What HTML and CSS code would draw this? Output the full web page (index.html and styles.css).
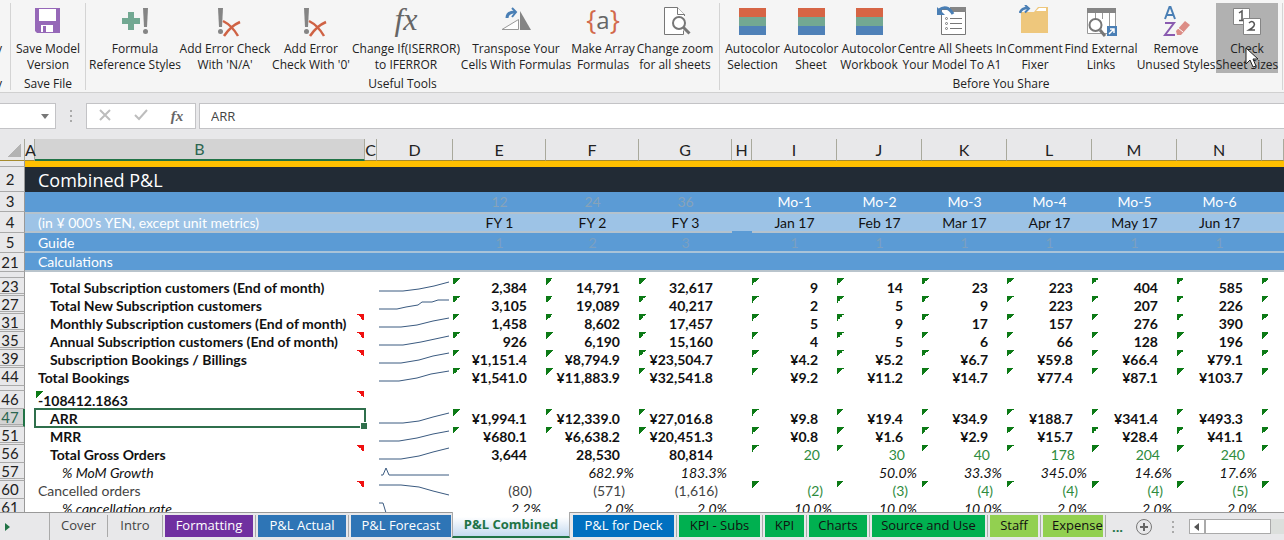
FILE: index.html
```html
<!DOCTYPE html>
<html lang="en">
<head>
  <meta charset="UTF-8" />
  <meta name="viewport" content="width=device-width,initial-scale=1.0" />
  <title>Combined P&amp;L</title>
  <link rel="stylesheet" href="styles.css">
</head>
<body>

  <!-- Ribbon -->
  <header class="ribbon">
    <div class="group group-cut">
      <div class="tools"><span>y</span></div>
      <div class="group-name">y</div>
    </div>

    <div class="group group-save">
      <div class="tools">
        <button class="tool">
          <svg width="32" height="32" viewBox="0 0 32 32">
            <path d="M3 3h25v25H5l-2-2z" fill="#9668b8"/>
            <path d="M7 4h17v12H7zM9 20h12v7H9z" fill="#fff"/>
            <path d="M11 21h3v6h-3z" fill="#9668b8"/>
          </svg>
          <span>Save Model<br>Version</span>
        </button>
      </div>
      <div class="group-name">Save File</div>
    </div>

    <div class="group group-useful">
      <div class="tools">
        <button class="tool">
          <svg width="32" height="32" viewBox="0 0 32 32">
            <path d="M9 7h6v6h6v6h-6v6H9v-6H3v-6h6z" fill="#72a892"/>
            <path d="M24 3h5l-1 19h-3z" fill="#858585"/>
            <circle cx="26.500" cy="26.500" r="2.500" fill="#858585"/>
          </svg>
          <span>Formula<br>Reference Styles</span>
        </button>
        <button class="tool">
          <svg width="32" height="32" viewBox="0 0 32 32">
            <path d="M9 3h5l-1 19h-3z" fill="#858585"/>
            <circle cx="11.500" cy="26.500" r="2.500" fill="#858585"/>
            <path d="M14 16c6 3 11 8 15 15M31 17c-7 3-12 8-16 14" fill="none" stroke="#cf6244" stroke-width="2.500"/>
          </svg>
          <span>Add Error Check<br>With 'N/A'</span>
        </button>
        <button class="tool">
          <svg width="32" height="32" viewBox="0 0 32 32">
            <path d="M9 3h5l-1 19h-3z" fill="#858585"/>
            <circle cx="11.500" cy="26.500" r="2.500" fill="#858585"/>
            <path d="M14 16c6 3 11 8 15 15M31 17c-7 3-12 8-16 14" fill="none" stroke="#cf6244" stroke-width="2.500"/>
          </svg>
          <span>Add Error<br>Check With '0'</span>
        </button>
        <button class="tool">
          <i class="fx">fx</i>
          <span>Change If(ISERROR)<br>to IFERROR</span>
        </button>
        <button class="tool">
          <svg width="32" height="32" viewBox="0 0 32 32">
            <path d="M2 24.500L18.500 14.500V24.500z" fill="#fff" stroke="#999"/>
            <path d="M20 6v19h11z" fill="#858585"/>
            <path d="M7 13q0-6 8-6" fill="none" stroke="#4a7fb5" stroke-width="3"/>
            <path d="M12 3l4 4-4 5" fill="none" stroke="#4a7fb5" stroke-width="2"/>
          </svg>
          <span>Transpose Your<br>Cells With Formulas</span>
        </button>
        <button class="tool">
          <i class="braces">{<b>a</b>}</i>
          <span>Make Array<br>Formulas</span>
        </button>
        <button class="tool">
          <svg width="32" height="32" viewBox="0 0 32 32">
            <path d="M25.500 11V9.500L18.500 2.500H5.500v27h19v-4" fill="#fff" stroke="#777"/>
            <path d="M18.500 2.500v7h7" fill="#fff" stroke="#777"/>
            <circle cx="20" cy="18" r="6" fill="#fff" stroke="#777" stroke-width="2"/>
            <path d="M24.500 22.500l6 6" stroke="#777" stroke-width="3"/>
          </svg>
          <span>Change zoom<br>for all sheets</span>
        </button>
      </div>
      <div class="group-name">Useful Tools</div>
    </div>

    <div class="group group-share">
      <div class="tools">
        <button class="tool"><i class="stripes"></i><span>Autocolor<br>Selection</span></button>
        <button class="tool"><i class="stripes"></i><span>Autocolor<br>Sheet</span></button>
        <button class="tool"><i class="stripes"></i><span>Autocolor<br>Workbook</span></button>
        <button class="tool">
          <svg width="32" height="32" viewBox="0 0 32 32">
            <path d="M5.500 4.500h24v25h-24z" fill="#fff" stroke="#777"/>
            <path d="M14 2h16v5H14z" fill="#858585"/>
            <path d="M14 13.500h12M14 18.500h12M14 23.500h12" stroke="#777"/>
            <path d="M3 5q8-6 14 4" fill="none" stroke="#4a7fb5" stroke-width="3"/>
            <path d="M1 2v8h8z" fill="#4a7fb5"/>
            <g fill="#fff" stroke="#777"><circle cx="10.500" cy="13.500" r="1"/><circle cx="10.500" cy="18.500" r="1"/><circle cx="10.500" cy="23.500" r="1"/></g>
          </svg>
          <span>Centre All Sheets In<br>Your Model To A1</span>
        </button>
        <button class="tool">
          <svg width="32" height="32" viewBox="0 0 32 32">
            <path d="M2 7h13l4-5h10v26H2z" fill="#eec77c"/>
            <path d="M17 6l3-3h7v3z" fill="#fff"/>
            <path d="M1 8q1-5 8-5" fill="none" stroke="#4a7fb5" stroke-width="2.500"/>
            <path d="M6 0l4 3.500-4 4" fill="none" stroke="#4a7fb5" stroke-width="2"/>
          </svg>
          <span>Comment<br>Fixer</span>
        </button>
        <button class="tool">
          <svg width="32" height="32" viewBox="0 0 32 32">
            <path d="M2.500 4.500h28v24h-28z" fill="#fff" stroke="#999"/>
            <path d="M2 3h29v5H2z" fill="#858585"/>
            <path d="M10.500 8v6M17.500 8v6M24.500 8v13" stroke="#999"/>
            <circle cx="10.500" cy="20" r="6" fill="#fff" stroke="#777" stroke-width="2"/>
            <path d="M15 25l5 6" stroke="#777" stroke-width="3"/>
            <path d="M22 21h10v10H22z" fill="#4a7fb5"/>
            <path d="M24 29l5-5M25 24h4v4" fill="none" stroke="#fff" stroke-width="1.500"/>
          </svg>
          <span>Find External<br>Links</span>
        </button>
        <button class="tool">
          <svg width="32" height="32" viewBox="0 0 32 32">
            <path d="M5 14L9.500 2h1L15 14M7 10h6" fill="none" stroke="#4a7fb5" stroke-width="2"/>
            <path d="M5 18h9L5 30h10" fill="none" stroke="#8a5bb0" stroke-width="2"/>
            <path d="M16 26l9-10 5 4-9 10h-4z" fill="#dc8d86"/>
            <path d="M18 23l5 4" stroke="#fff"/>
          </svg>
          <span>Remove<br>Unused Styles</span>
        </button>
        <button class="tool tool-hover">
          <svg width="32" height="32" viewBox="0 0 32 32">
            <path d="M2.500 3.500h16v16h-16z" fill="#fff" stroke="#858585"/>
            <path d="M8 8l3-2v9M8 15.500h5" fill="none" stroke="#555" stroke-width="1.500"/>
            <path d="M12.500 13.500h17v16h-17z" fill="#fff" stroke="#858585"/>
            <path d="M18 18q3-3 5 0t-5 7h6" fill="none" stroke="#555" stroke-width="1.500"/>
          </svg>
          <span>Check<br>Sheet Sizes</span>
          <svg class="pointer" width="14" height="22" viewBox="0 0 14 22">
            <path d="M1 1v16l4-4 3 7 3-1-3-7h5z" fill="#fff" stroke="#222"/>
          </svg>
        </button>
      </div>
      <div class="group-name">Before You Share</div>
    </div>
  </header>

  <!-- Formula bar -->
  <div class="formula-bar">
    <button class="name-box" aria-label="Name box"><i></i></button>
    <span class="grip"></span>
    <div class="formula-buttons">
      <button aria-label="Cancel">
        <svg width="12" height="12" viewBox="0 0 12 12"><path d="M1 1l10 10M11 1L1 11" stroke="#bdbdbd" stroke-width="2"/></svg>
      </button>
      <button aria-label="Enter">
        <svg width="14" height="12" viewBox="0 0 14 12"><path d="M1 6l4 4 8-9" fill="none" stroke="#bdbdbd" stroke-width="2"/></svg>
      </button>
      <button aria-label="Insert function"><i class="fx-small">fx</i></button>
    </div>
    <input class="formula" type="text" value="ARR" aria-label="Formula">
  </div>

  <!-- Worksheet -->
  <main class="sheet">
    <table>
      <colgroup>
        <col class="w-head"><col class="w-a"><col class="w-b"><col class="w-c"><col class="w-d">
        <col class="w-year"><col class="w-year"><col class="w-year"><col class="w-h">
        <col class="w-month"><col class="w-month"><col class="w-month"><col class="w-month"><col class="w-month"><col class="w-month">
        <col>
      </colgroup>
      <thead>
        <tr>
          <th class="corner"></th><th>A</th><th class="picked">B</th><th>C</th><th>D</th><th>E</th><th>F</th><th>G</th><th>H</th><th>I</th><th>J</th><th>K</th><th>L</th><th>M</th><th>N</th><th></th>
        </tr>
      </thead>
      <tbody>
        <tr class="gold"><th></th><td colspan="15"></td></tr>
        <tr class="title"><th>2</th><td></td><td colspan="14">Combined P&amp;L</td></tr>
        <tr class="band periods">
          <th>3</th><td></td><td></td><td></td><td></td>
          <td class="faint">12</td><td class="faint">24</td><td class="faint">36</td><td></td>
          <td>Mo-1</td><td>Mo-2</td><td>Mo-3</td><td>Mo-4</td><td>Mo-5</td><td>Mo-6</td><td></td>
        </tr>
        <tr class="band dates">
          <th>4</th><td></td><td class="label">(in ¥ 000's YEN, except unit metrics)</td><td></td><td></td>
          <td>FY 1</td><td>FY 2</td><td>FY 3</td><td class="no-line"></td>
          <td>Jan 17</td><td>Feb 17</td><td>Mar 17</td><td>Apr 17</td><td>May 17</td><td>Jun 17</td><td></td>
        </tr>
        <tr class="band guide">
          <th>5</th><td></td><td class="label">Guide</td><td></td><td></td>
          <td class="faint">1</td><td class="faint">2</td><td class="faint">3</td><td></td>
          <td class="faint">1</td><td class="faint">1</td><td class="faint">1</td><td class="faint">1</td><td class="faint">1</td><td class="faint">1</td><td></td>
        </tr>
        <tr class="band calc"><th>21</th><td></td><td class="label" colspan="14">Calculations</td></tr>
        <tr class="gap"><th></th><td colspan="15"></td></tr>

        <tr class="total flags-all skip">
          <th>23</th><td></td><td class="in1">Total Subscription customers (End of month)</td><td></td>
          <td><svg class="spark" viewBox="0 0 76 18"><path d="M2 13h24l16-2 15-3 15-4"/></svg></td>
          <td>2,384</td><td>14,791</td><td>32,617</td><td></td>
          <td>9</td><td>14</td><td>23</td><td>223</td><td>404</td><td>585</td><td></td>
        </tr>
        <tr class="total flags-all skip">
          <th>27</th><td></td><td class="in1">Total New Subscription customers</td><td></td>
          <td><svg class="spark" viewBox="0 0 76 18"><path d="M2 13h18l9-2 6-1 6-1 4-3h10l6-2h11"/></svg></td>
          <td>3,105</td><td>19,089</td><td>40,217</td><td></td>
          <td>2</td><td>5</td><td>9</td><td>223</td><td>207</td><td>226</td><td></td>
        </tr>
        <tr class="total flags-all skip">
          <th>31</th><td></td><td class="in1 note">Monthly Subscription customers (End of month)</td><td></td>
          <td><svg class="spark" viewBox="0 0 76 18"><path d="M2 13h22l16-2 16-4 16-3"/></svg></td>
          <td>1,458</td><td>8,602</td><td>17,457</td><td></td>
          <td>5</td><td>9</td><td>17</td><td>157</td><td>276</td><td>390</td><td></td>
        </tr>
        <tr class="total flags-all skip">
          <th>35</th><td></td><td class="in1 note">Annual Subscription customers (End of month)</td><td></td>
          <td><svg class="spark" viewBox="0 0 76 18"><path d="M2 13h24l18-3 14-3 14-3"/></svg></td>
          <td>926</td><td>6,190</td><td>15,160</td><td></td>
          <td>4</td><td>5</td><td>6</td><td>66</td><td>128</td><td>196</td><td></td>
        </tr>
        <tr class="total flags-all skip">
          <th>39</th><td></td><td class="in1 note">Subscription Bookings / Billings</td><td></td>
          <td><svg class="spark" viewBox="0 0 76 18"><path d="M2 13h22l18-3 14-4 16-3"/></svg></td>
          <td>¥1,151.4</td><td>¥8,794.9</td><td>¥23,504.7</td><td></td>
          <td>¥4.2</td><td>¥5.2</td><td>¥6.7</td><td>¥59.8</td><td>¥66.4</td><td>¥79.1</td><td></td>
        </tr>
        <tr class="total flags-all">
          <th>44</th><td></td><td>Total Bookings</td><td></td>
          <td><svg class="spark" viewBox="0 0 76 18"><path d="M2 13h20l18-3 14-4 18-3"/></svg></td>
          <td>¥1,541.0</td><td>¥11,883.9</td><td>¥32,541.8</td><td></td>
          <td>¥9.2</td><td>¥11.2</td><td>¥14.7</td><td>¥77.4</td><td>¥87.1</td><td>¥103.7</td><td></td>
        </tr>
        <tr class="gap gap-wide"><th></th><td colspan="15"></td></tr>
        <tr class="total">
          <th>46</th><td></td><td class="note flag">-108412.1863</td><td></td><td></td>
          <td></td><td></td><td></td><td></td><td></td><td></td><td></td><td></td><td></td><td></td><td></td>
        </tr>
        <tr class="total flags-all skip current">
          <th>47</th><td></td><td class="in1 selected">ARR</td><td></td>
          <td><svg class="spark" viewBox="0 0 76 18"><path d="M2 14h24l16-2 14-4 16-4"/></svg></td>
          <td>¥1,994.1</td><td>¥12,339.0</td><td>¥27,016.8</td><td></td>
          <td>¥9.8</td><td>¥19.4</td><td>¥34.9</td><td>¥188.7</td><td>¥341.4</td><td>¥493.3</td><td></td>
        </tr>
        <tr class="total flags-all skip">
          <th>51</th><td></td><td class="in1">MRR</td><td></td>
          <td><svg class="spark" viewBox="0 0 76 18"><path d="M2 14h20l18-3 16-4 16-3"/></svg></td>
          <td>¥680.1</td><td>¥6,638.2</td><td>¥20,451.3</td><td></td>
          <td>¥0.8</td><td>¥1.6</td><td>¥2.9</td><td>¥15.7</td><td>¥28.4</td><td>¥41.1</td><td></td>
        </tr>
        <tr class="total flags-months">
          <th>56</th><td></td><td class="in1 note">Total Gross Orders</td><td></td>
          <td><svg class="spark" viewBox="0 0 76 18"><path d="M2 14h22l18-3 14-4 16-4"/></svg></td>
          <td>3,644</td><td>28,530</td><td>80,814</td><td></td>
          <td class="link">20</td><td class="link">30</td><td class="link">40</td><td class="link">178</td><td class="link">204</td><td class="link">240</td><td></td>
        </tr>
        <tr class="rate skip">
          <th>57</th><td></td><td class="in2">% MoM Growth</td><td></td>
          <td><svg class="spark" viewBox="0 0 76 18"><path d="M4 12h2l3-7 3 7h60"/></svg></td>
          <td></td><td>682.9%</td><td>183.3%</td><td></td>
          <td></td><td>50.0%</td><td>33.3%</td><td>345.0%</td><td>14.6%</td><td>17.6%</td><td></td>
        </tr>
        <tr class="minus flags-months">
          <th>60</th><td></td><td class="note">Cancelled orders</td><td></td>
          <td><svg class="spark" viewBox="0 0 76 18"><path d="M2 4h22l18 2 14 4 16 4"/></svg></td>
          <td>(80)</td><td>(571)</td><td>(1,616)</td><td></td>
          <td class="link">(2)</td><td class="link">(3)</td><td class="link">(4)</td><td class="link">(4)</td><td class="link">(4)</td><td class="link">(5)</td><td></td>
        </tr>
        <tr class="rate">
          <th>61</th><td></td><td class="in2">% cancellation rate</td><td></td>
          <td><svg class="spark" viewBox="0 0 76 18"><path d="M2 4h4l4 13h62"/></svg></td>
          <td>2.2%</td><td>2.0%</td><td>2.0%</td><td></td>
          <td>10.0%</td><td>10.0%</td><td>10.0%</td><td>2.0%</td><td>2.0%</td><td>2.0%</td><td></td>
        </tr>
      </tbody>
    </table>
  </main>

  <!-- Sheet tabs -->
  <footer class="tab-bar">
    <button class="scroll-tabs" aria-label="Next sheets"></button>
    <nav class="tabs">
      <button class="tab w58">Cover</button>
      <button class="tab w54">Intro</button>
      <button class="tab color purple w88">Formatting</button>
      <button class="tab color blue w88">P&amp;L Actual</button>
      <button class="tab color blue w100">P&amp;L Forecast</button>
      <button class="tab active">P&amp;L Combined</button>
      <button class="tab color deck w101">P&amp;L for Deck</button>
      <button class="tab color green w81">KPI - Subs</button>
      <button class="tab color green w39">KPI</button>
      <button class="tab color green w58">Charts</button>
      <button class="tab color green w113">Source and Use</button>
      <button class="tab color lime w48">Staff</button>
      <button class="tab color lime cut">Expense</button>
    </nav>
    <button class="more" aria-label="More sheets">...</button>
    <button class="add" aria-label="New sheet">
      <svg width="18" height="18" viewBox="0 0 18 18">
        <circle cx="9" cy="9" r="7.500" fill="none" stroke="#777"/>
        <path d="M9 5v8M5 9h8" stroke="#666" stroke-width="2"/>
      </svg>
    </button>
    <span class="grip"></span>
    <div class="scrollbar">
      <button class="scroll-left" aria-label="Scroll left"></button>
      <div class="thumb"></div>
    </div>
  </footer>

</body>
</html>
```
FILE: styles.css
```css
* {
  box-sizing: border-box;
}
body {
  margin: 0;
  height: 100vh;
  display: flex;
  flex-direction: column;
  overflow: hidden;
  background: #e8e8ea;
  color: #222;
  font-family: "Open Sans", "Noto Sans", sans-serif;
  font-size: 12px;
}
button {
  border: 0;
  padding: 0;
  background: none;
  color: inherit;
  font: inherit;
}

/* Ribbon */
.ribbon {
  display: flex;
  flex: none;
  padding-top: 3px;
  background: #f5f5f5;
  border-bottom: 1px solid #d0d0d0;
}
.group {
  display: flex;
  flex-direction: column;
  border-right: 1px solid #d4d4d4;
  margin-bottom: 2px;
}
.tools {
  display: grid;
  height: 70px;
}
.group-cut {
  width: 11px;
}
.group-cut .tools {
  align-items: end;
  padding-bottom: 16px;
}
.group-cut .tools,
.group-cut .group-name {
  direction: rtl;
  padding-right: 8px;
}
.group-save {
  width: 75px;
}
.group-useful {
  width: 634px;
}
.group-useful .tools {
  grid-template-columns: 92px 88px 84px 106px 114px 60px 84px;
  padding-left: 3px;
}
.group-share {
  width: 563px;
}
.group-share .tools {
  grid-template-columns: 59px 58px 58px 108px 58px 74px 76px 66px;
  padding-left: 3px;
}
.group-name {
  margin-top: 5px;
  line-height: 12px;
  text-align: center;
}
.tool {
  display: flex;
  flex-direction: column;
  align-items: center;
  gap: 4px;
  padding-top: 2px;
  line-height: 16px;
  white-space: nowrap;
}
.tool > svg,
.tool > i {
  flex: none;
  width: 32px;
  height: 32px;
}
.tool > .pointer {
  position: absolute;
  left: 29px;
  top: 44px;
  width: 14px;
  height: 22px;
}
.tool-hover {
  position: relative;
  margin: 0 2px;
  background: #b1b1b1;
}
.fx {
  font: italic 32px/28px "Liberation Serif", serif;
  color: #666;
}
.braces {
  display: flex;
  justify-content: center;
  font: 27px/30px "Open Sans", sans-serif;
  color: #d2694c;
}
.braces b {
  font-weight: 400;
  font-size: 24px;
  color: #666;
}
.stripes {
  background: linear-gradient(#d66545 9px, #73a892 9px 18px, #4f81b8 18px) no-repeat center 3px / 27px 27px;
}

/* Formula bar */
.formula-bar {
  display: flex;
  flex: none;
  height: 26px;
  margin: 10px 0;
}
.formula-bar > * {
  border: 1px solid #c3c3c6;
  background: #fff;
}
.formula-bar .name-box {
  width: 56px;
  display: flex;
  align-items: center;
  justify-content: flex-end;
  padding-right: 6px;
  border-left: 0;
}
.name-box i {
  border: 4px solid transparent;
  border-top: 5px solid #777;
  border-bottom: 0;
}
.grip,
.formula-bar .grip {
  width: 2px;
  height: 12px;
  margin: 7px 14px;
  border: 0;
  background: repeating-linear-gradient(#aaa 0 2px, transparent 2px 5px);
}
.formula-buttons {
  display: grid;
  grid-template-columns: repeat(3, 1fr);
  place-items: center;
  width: 110px;
  margin-right: 3px;
}
.fx-small {
  font: italic bold 15px/20px "Liberation Serif", serif;
  color: #666;
}
.formula {
  flex: 1;
  min-width: 0;
  padding: 0 11px;
  border-right: 0;
  color: #444;
  font: 13px "Open Sans", sans-serif;
}

/* Worksheet */
.sheet {
  flex: 1;
  min-height: 0;
  overflow: hidden;
  font-family: Lato, "Open Sans", sans-serif;
  font-size: 14px;
  background: #fff;
}
table {
  width: 100%;
  table-layout: fixed;
  border-collapse: separate;
  border-spacing: 0;
}
.w-head { width: 25px; }
.w-a { width: 10px; }
.w-b { width: 330px; }
.w-c { width: 12px; }
.w-d { width: 76px; }
.w-year { width: 93px; }
.w-h { width: 20px; }
.w-month { width: 85px; }
th,
td {
  padding: 0;
  height: 18px;
  line-height: 17px;
  white-space: nowrap;
}
thead th {
  height: 22px;
  border-right: 1px solid #a9a99c;
  border-bottom: 1px solid #a58b2e;
  background: #e8e8ea;
  color: #222;
  font-size: 16px;
  font-weight: 400;
  line-height: 20px;
}
thead .corner {
  background: linear-gradient(135deg, transparent 50%, #b3b3b3 50%) no-repeat 8px 5px / 13px 13px #e8e8ea;
}
thead .picked {
  background: #d3d3d3;
  border-bottom: 2px solid #217346;
  color: #2c6650;
}
tbody th {
  padding-right: 4px;
  border-right: 1px solid #999;
  border-bottom: 1px solid #aaa;
  background: #e8e8ea;
  color: #222;
  font-size: 15px;
  font-weight: 400;
}
/* Hidden rows below leave a second line in the row header */
.skip th {
  background: linear-gradient(#aaa, #aaa) no-repeat 0 15px / 100% 1px #e8e8ea;
}
td {
  text-align: right;
  color: #111;
}
td:nth-child(3) {
  padding-left: 3px;
  text-align: left;
}
td.in1 { padding-left: 15px; }
td.in2 { padding-left: 27px; }

.gold th,
.gold td {
  height: 6px;
  line-height: 0;
}
.gold td {
  background: #ffc000;
}
.title th,
.title td {
  height: 25px;
  line-height: 24px;
}
.title td {
  background: #222b35;
  color: #fff;
}
.title td + td {
  font: 18px/24px "Open Sans", sans-serif;
}
.band td {
  background: #5b9bd5;
  color: #fff;
  text-align: center;
}
.band td.label {
  text-align: left;
}
.band td.faint {
  color: #87a3b9;
}
.periods th {
  line-height: 19px;
}
.periods td {
  height: 20px;
  line-height: 20px;
}
.dates th, .dates td {
  height: 21px;
}
.band.dates td {
  background: #9dc3e6;
  color: #111;
  border-top: 2px solid #b4c2cd;
  border-bottom: 2px solid #b4c2cd;
}
.band.dates td.label {
  color: #fff;
}
.band.dates td.no-line {
  border-bottom-color: #5b9bd5;
}
.guide th, .guide td {
  height: 20px;
}
.guide td {
  border-bottom: 2px solid #a9c3d8;
}
.band.guide .faint {
  color: #7ba0c0;
}
.calc th, .calc td {
  height: 19px;
}
.calc td {
  border-bottom: 2px solid #b9c4cc;
}
.gap th, .gap td {
  height: 6px;
  line-height: 0;
}
.gap-wide th, .gap-wide td {
  height: 5px;
}

.total td {
  font-weight: 700;
  padding-right: 19px;
}
.minus td {
  padding-right: 14px;
  color: #444;
}
.rate td {
  padding-right: 5px;
  font-style: italic;
}
.total td.link {
  font-weight: 400;
  padding-right: 17px;
}
td.link {
  color: #2e8b3d;
}
.total td:nth-child(5),
.minus td:nth-child(5),
.rate td:nth-child(5),
.total td:nth-child(3) {
  padding-right: 0;
}
.spark {
  display: block;
  width: 76px;
  height: 18px;
}
.spark path {
  fill: none;
  stroke: #3a5a80;
}

/* Corner marks: green for errors, red for comments */
.flags-all td:nth-child(n+6):not(:nth-child(9)),
.flags-months td:nth-child(n+10) {
  background: linear-gradient(135deg, #0c7a16 50%, transparent 50%) no-repeat 0 0 / 7px 7px;
}
.note {
  background: linear-gradient(225deg, #f01010 50%, transparent 50%) no-repeat 322px 0 / 7px 7px;
}
.note.flag {
  background:
    linear-gradient(135deg, #0c7a16 50%, transparent 50%) no-repeat 1px 0 / 7px 7px,
    linear-gradient(225deg, #f01010 50%, transparent 50%) no-repeat 322px 0 / 7px 7px;
}
.current th {
  background-color: #d3d3d3;
  border-right: 2px solid #217346;
  padding-right: 3px;
  color: #2c6650;
}
.selected {
  position: relative;
}
.selected::before {
  content: "";
  position: absolute;
  inset: -1px;
  border: 2px solid #2f6f4c;
}
.selected::after {
  content: "";
  position: absolute;
  right: -2px;
  bottom: -2px;
  width: 6px;
  height: 6px;
  background: #2f6f4c;
  border-top: 1px solid #fff;
  border-left: 1px solid #fff;
}

/* Sheet tabs */
.tab-bar {
  display: flex;
  flex: none;
  align-items: center;
  height: 28px;
  border-top: 1px solid #999;
  font-size: 13px;
}
.scroll-tabs {
  width: 49px;
  height: 26px;
}
.scroll-tabs::before {
  content: "";
  display: block;
  width: 0;
  margin-left: 5px;
  border: 4px solid transparent;
  border-left: 5px solid #217346;
  border-right: 0;
}
.tabs {
  display: flex;
  align-self: stretch;
  border-left: 1px solid #aaa;
}
.tab {
  height: 22px;
  margin-top: 2px;
  padding-bottom: 2px;
  border-right: 1px solid #aaa;
  color: #444;
  line-height: 20px;
  white-space: nowrap;
}
.tab.color {
  margin: 2px 5px 0 0;
  border: 0;
  box-shadow: 2px 0 #e8e8ea, 3px 0 #aaa;
}
.tab.color.purple {
  margin-left: 2px;
}
.w39 { width: 39px; }
.w48 { width: 48px; }
.w54 { width: 55px; }
.w58 { width: 58px; }
.w81 { width: 81px; }
.w88 { width: 88px; }
.w100 { width: 100px; }
.w101 { width: 101px; }
.w113 { width: 113px; }
.tab.purple { background: #7030a0; color: #fff; }
.tab.blue { background: #2e75b6; color: #fff; }
.tab.deck { background: #0070c0; color: #fff; }
.tab.green { background: #00b050; color: #111; }
.tab.lime { background: #92d050; color: #111; }
.tab.cut {
  width: 60px;
  padding-left: 9px;
  overflow: hidden;
  text-align: left;
}
.tab.active {
  width: 118px;
  height: 26px;
  margin: -1px 3px 0 -4px;
  padding-bottom: 0;
  background: linear-gradient(#fff 20%, #c5daf0);
  border: 1px solid #aaa;
  border-top: 0;
  border-bottom: 2px solid #217346;
  color: #217346;
  font-weight: 700;
}
.more {
  width: 23px;
  padding-right: 4px;
  color: #217346;
  font-weight: 700;
}
.add {
  display: flex;
  margin-left: 4px;
}
.tab-bar .grip {
  margin: 0 15px 0 19px;
}
.scrollbar {
  display: flex;
  flex: 1;
  height: 15px;
  background: #dcdfdc;
}
.scroll-left {
  width: 16px;
  background: #fff;
  border: 1px solid #aaa;
}
.scroll-left::before {
  content: "";
  display: block;
  width: 0;
  margin-left: 4px;
  border: 4px solid transparent;
  border-right: 5px solid #555;
  border-left: 0;
}
.thumb {
  width: 66px;
  background: #fff;
  border: 1px solid #aaa;
}
```
